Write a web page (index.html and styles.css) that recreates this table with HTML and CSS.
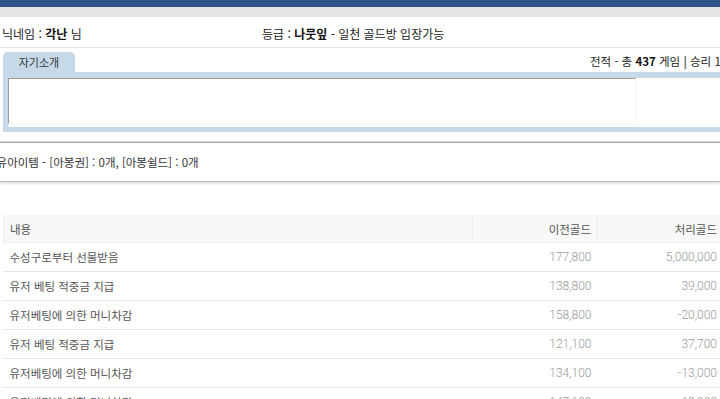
FILE: index.html
```html
<!DOCTYPE html>
<html lang="ko">
<head>
<meta charset="utf-8">
<title>회원 정보</title>
<link rel="stylesheet" href="styles.css">
</head>
<body>
<div class="topbar"></div>
<div class="subbar"></div>
<div class="info">
  <div class="nick">닉네임 : <b>각난</b> 님</div>
  <div class="grade">등급 : <b>나뭇잎</b> - 일천 골드방 입장가능</div>
</div>
<div class="tabrow">
  <div class="tab">자기소개</div>
  <div class="stats">전적 - 총 <b>437</b> 게임 <span class="pipe">|</span> 승리 197 게임, 패배 240 게임</div>
</div>
<div class="panel">
  <div class="panel-inner"><div class="memo"></div></div>
</div>
<div class="items">보유아이템 - [아봉권] : 0개, [아봉쉴드] : 0개</div>
<table class="log">
  <thead>
    <tr><th class="c1">내용</th><th class="c2">이전골드</th><th class="c3">처리골드</th></tr>
  </thead>
  <tbody>
    <tr><td>수성구로부터 선물받음</td><td class="num">177,800</td><td class="num">5,000,000</td></tr>
    <tr><td>유저 베팅 적중금 지급</td><td class="num">138,800</td><td class="num">39,000</td></tr>
    <tr><td>유저베팅에 의한 머니차감</td><td class="num">158,800</td><td class="num">-20,000</td></tr>
    <tr><td>유저 베팅 적중금 지급</td><td class="num">121,100</td><td class="num">37,700</td></tr>
    <tr><td>유저베팅에 의한 머니차감</td><td class="num">134,100</td><td class="num">-13,000</td></tr>
    <tr><td>유저베팅에 의한 머니차감</td><td class="num">147,100</td><td class="num">-13,000</td></tr>
  </tbody>
</table>
</body>
</html>
```
FILE: styles.css
```css
html, body {
  margin: 0;
  padding: 0;
  background: #fff;
}
body {
  width: 720px;
  height: 399px;
  overflow: hidden;
  font-family: "Noto Sans CJK KR", "Noto Sans", sans-serif;
  font-size: 12px;
  color: #222;
}
b { font-weight: bold; color: #111; }

.topbar { height: 7px; background: #2d5188; }
.subbar { height: 10px; background: #e4e4e6; }

.info {
  display: grid;
  grid-template-columns: 260px 1fr;
  align-items: center;
  padding-left: 2px;
  padding-top: 3px;
  box-sizing: border-box;
  height: 31px;
  border-bottom: 1px solid #e2e2e2;
  white-space: nowrap;
}

.tabrow {
  height: 24px;
  display: flex;
  align-items: flex-end;
  white-space: nowrap;
}
.tab {
  flex: 0 0 72px;
  height: 20px;
  margin-left: 3px;
  background: #c6d9e8;
  border-radius: 5px 5px 0 0;
  text-align: center;
  line-height: 21px;
  font-size: 11px;
  color: #333;
}
.stats {
  flex: 0 0 auto;
  margin-left: 515px;
  line-height: 18px;
  margin-bottom: 2px;
  font-size: 11.5px;
  color: #222;
}
.pipe { color: #555; font-weight: bold; }

.panel {
  margin-left: 3px;
  height: 60px;
  box-sizing: border-box;
  padding: 6px 0 5px 5px;
  background: #c6d9e8;
}
.panel-inner {
  height: 49px;
  background: #fff;
}
.memo {
  width: 628px;
  height: 46px;
  box-sizing: border-box;
  border-top: 1px solid #9c9c9c;
  border-left: 1px solid #9c9c9c;
  border-right: 1px solid #f4f4f4;
  border-bottom: 1px solid #f4f4f4;
}

.items {
  margin-top: 10px;
  height: 38px;
  line-height: 38px;
  border-top: 1px solid #a8a8a8;
  border-bottom: 1px solid #b8b8b8;
  box-shadow: 0 -1px 0 #d8d8d8, 0 2px 2px #e4e4e4;
  text-indent: -14px;
  font-size: 11.5px;
  white-space: nowrap;
  color: #333;
}

.log {
  margin-top: 33px;
  margin-left: 3px;
  width: 720px;
  border-collapse: collapse;
  table-layout: fixed;
  font-size: 11.5px;
}
.log th {
  height: 27px;
  background: #f8f8f8;
  font-weight: normal;
  color: #555;
  border-left: 1px solid #ececec;
  border-bottom: 1px solid #f0f0f0;
  padding: 0 6px;
  text-align: right;
}
.log th.c1 { width: 456px; text-align: left; }
.log th.c2 { width: 112px; }
.log td {
  height: 28px;
  border-bottom: 1px solid #e6e6e6;
  padding: 0 6px;
  color: #555;
  white-space: nowrap;
}
.log td.num {
  text-align: right;
  font-family: Roboto, "Noto Sans", sans-serif;
  font-weight: 300;
  font-size: 12px;
  color: #999;
}
```
